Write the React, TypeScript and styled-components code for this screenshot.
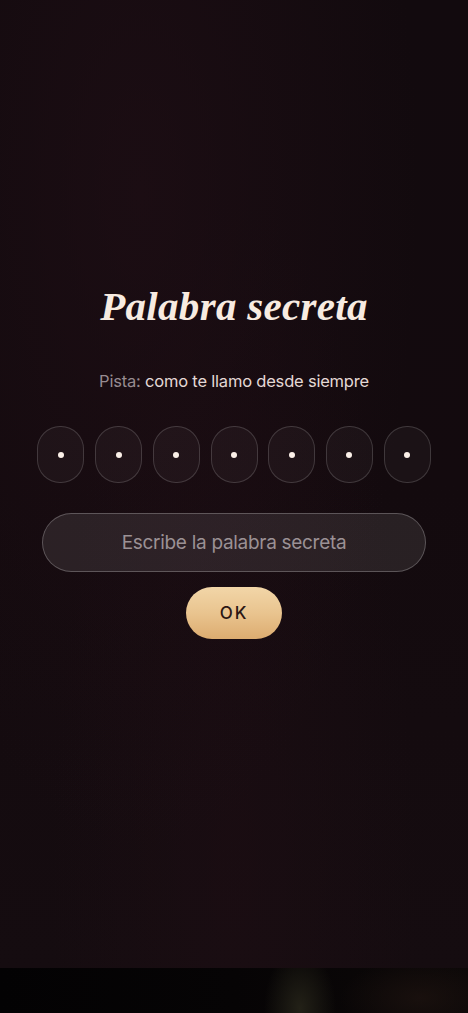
import styled, { createGlobalStyle } from 'styled-components';

const GlobalStyle = createGlobalStyle`
  html, body {
    margin: 0;
    padding: 0;
    background: #120a0e;
  }
  * {
    box-sizing: border-box;
  }
`;

const Screen = styled.div`
  width: 468px;
  height: 1013px;
  display: flex;
  flex-direction: column;
  overflow: hidden;
  background: #120a0e;
`;

const Stage = styled.main`
  flex: 1;
  display: flex;
  flex-direction: column;
  align-items: center;
  padding-top: 280px;
  background:
    radial-gradient(ellipse at 30% 20%, rgba(36, 16, 24, 0.5), transparent 60%),
    radial-gradient(ellipse at 50% 92%, rgba(30, 14, 20, 0.55), transparent 55%),
    linear-gradient(180deg, #120a0e 0%, #130a0e 50%, #150c10 100%);
`;

const Title = styled.h1`
  margin: 0;
  font-family: 'Liberation Serif', 'DejaVu Serif', serif;
  font-style: italic;
  font-weight: 700;
  font-size: 41px;
  line-height: 52px;
  color: #f7ebe1;
  letter-spacing: 0.3px;
`;

const Hint = styled.p`
  margin: 38px 0 0;
  font-family: Inter, 'Noto Sans', sans-serif;
  font-size: 16.5px;
  font-weight: 400;
  line-height: 22px;
  color: #e4d9d6;
  letter-spacing: -0.2px;
`;

const HintLabel = styled.span`
  color: #978b90;
`;

const Slots = styled.div`
  display: flex;
  gap: 10.7px;
  margin-top: 34px;
`;

const Slot = styled.div`
  width: 47px;
  height: 57px;
  border-radius: 23px;
  border: 1px solid rgba(255, 255, 255, 0.16);
  background: rgba(255, 255, 255, 0.035);
  display: flex;
  align-items: center;
  justify-content: center;
`;

const Dot = styled.span`
  width: 6px;
  height: 6px;
  border-radius: 50%;
  background: #fbf0e8;
`;

const Field = styled.input`
  margin-top: 30px;
  width: 384px;
  height: 59px;
  border-radius: 30px;
  border: 1px solid rgba(255, 255, 255, 0.24);
  background: rgba(255, 255, 255, 0.09);
  color: #e8dede;
  font-family: Inter, 'Noto Sans', sans-serif;
  font-size: 19px;
  letter-spacing: -0.3px;
  text-align: center;
  outline: none;

  &::placeholder {
    color: #9b9195;
  }
`;

const OkButton = styled.button`
  margin-top: 15px;
  width: 96px;
  height: 52px;
  border: none;
  border-radius: 26px;
  background: linear-gradient(180deg, #f2d6a8 0%, #e9c48f 50%, #dcac70 100%);
  color: #2b1714;
  font-family: Inter, 'Noto Sans', sans-serif;
  font-size: 17px;
  font-weight: 500;
  letter-spacing: 2px;
  cursor: pointer;
`;

const BottomStrip = styled.div`
  height: 45px;
  flex-shrink: 0;
  background:
    radial-gradient(ellipse 36px 60px at 300px 40px, rgba(36, 34, 24, 0.95), transparent 100%),
    radial-gradient(ellipse 80px 40px at 420px 30px, rgba(28, 18, 15, 0.8), transparent 100%),
    linear-gradient(90deg, #030203 0%, #060405 50%, #0c0808 100%);
`;

const App = () => {
  const slots = Array.from({ length: 7 });
  return (
    <>
      <GlobalStyle />
      <Screen>
        <Stage>
          <Title>Palabra secreta</Title>
          <Hint>
            <HintLabel>Pista:</HintLabel> como te llamo desde siempre
          </Hint>
          <Slots>
            {slots.map((_, i) => (
              <Slot key={i}>
                <Dot />
              </Slot>
            ))}
          </Slots>
          <Field type="text" placeholder="Escribe la palabra secreta" />
          <OkButton type="button">OK</OkButton>
        </Stage>
        <BottomStrip />
      </Screen>
    </>
  );
};

export default App;
